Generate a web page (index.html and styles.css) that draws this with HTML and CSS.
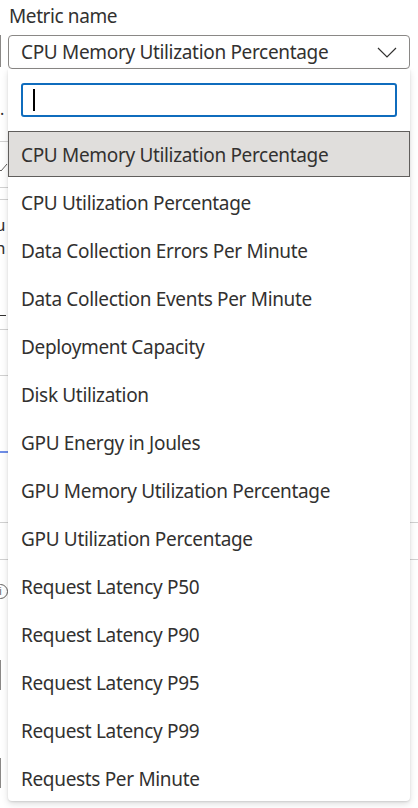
FILE: index.html
```html
<!doctype html>
<html lang="en">
<head>
  <meta charset="UTF-8">
  <meta name="viewport" content="width=device-width, initial-scale=1.0">
  <title>Metric name</title>
  <link rel="stylesheet" href="styles.css">
</head>
<body>
  <div class="page">
    <label class="field-label">Metric name</label>
    <div class="combo-row">
      <div class="combo">
        <span class="combo-value">CPU Memory Utilization Percentage</span>
        <svg class="chevron" width="20" height="11" viewBox="0 0 20 11">
          <polyline points="1,1 10,10 19,1" fill="none" stroke="#323130" stroke-width="1.2"/>
        </svg>
      </div>
    </div>

    <!-- content behind the open dropdown -->
    <div class="underlay">
      <div class="u-row u-a"><span class="dot">.</span></div>
      <div class="u-row u-b">
        <svg class="check" width="8" height="8" viewBox="0 0 8 8">
          <polyline points="-2,4 1,7 7,0" fill="none" stroke="#605e5c" stroke-width="1"/>
        </svg>
      </div>
      <div class="u-row u-c"></div>
      <div class="u-text">
        <span class="clip-letter first">u</span>
        <span class="clip-letter">h</span>
      </div>
      <div class="u-row u-e"><span class="dash"></span></div>
      <div class="u-row u-f"></div>
      <div class="u-row u-g"></div>
      <div class="u-row u-h full"></div>
      <div class="u-row u-i full"></div>
      <div class="u-info"><span class="info-circle">i</span></div>
      <div class="u-bar first"></div>
      <div class="u-bar"></div>
    </div>

    <div class="dropdown">
      <div class="search"><span class="caret"></span></div>
      <ul class="options">
        <li class="option selected">CPU Memory Utilization Percentage</li>
        <li class="option">CPU Utilization Percentage</li>
        <li class="option">Data Collection Errors Per Minute</li>
        <li class="option">Data Collection Events Per Minute</li>
        <li class="option">Deployment Capacity</li>
        <li class="option">Disk Utilization</li>
        <li class="option">GPU Energy in Joules</li>
        <li class="option">GPU Memory Utilization Percentage</li>
        <li class="option">GPU Utilization Percentage</li>
        <li class="option">Request Latency P50</li>
        <li class="option">Request Latency P90</li>
        <li class="option">Request Latency P95</li>
        <li class="option">Request Latency P99</li>
        <li class="option">Requests Per Minute</li>
      </ul>
    </div>
  </div>
</body>
</html>
```

FILE: styles.css
```css
body {
    margin: 0;
    background: #ffffff;
    font-family: "Noto Sans", "Open Sans", sans-serif;
    color: #323130;
    overflow: hidden;
}
.page {
    position: relative;
    width: 418px;
    height: 808px;
    overflow: hidden;
}
.field-label {
    display: block;
    height: 35px;
    padding-left: 9px;
    font-size: 19px;
    letter-spacing: -0.4px;
    line-height: 33px;
}
.combo-row {
    position: relative;
    padding-left: 8px;
    padding-right: 8px;
}
.combo-row::before {
    content: "";
    position: absolute;
    left: 0;
    top: 0;
    width: 1px;
    height: 32px;
    background: #8a8886;
}
.combo {
    box-sizing: border-box;
    height: 34px;
    border: 1px solid #8a8886;
    border-radius: 4px;
    display: flex;
    align-items: center;
    justify-content: space-between;
    padding: 0 12px 0 12px;
}
.combo-value {
    font-size: 19px;
    letter-spacing: -0.33px;
    line-height: 32px;
}
.chevron {
    display: block;
    margin-top: 1px;
}

/* underlay */
.u-row {
    box-sizing: border-box;
    width: 200px;
    border-bottom: 1px solid #d1d1d1;
    position: relative;
}
.u-row.full {
    width: 100%;
}
.u-a { height: 73px; }
.dot {
    position: absolute;
    left: 0;
    top: 32px;
    font-size: 16px;
    line-height: 16px;
}
.u-b { height: 46px; }
.check {
    position: absolute;
    left: 0;
    top: 22px;
}
.u-c { height: 12px; }
.u-text {
    height: 60px;
    padding-top: 16px;
    box-sizing: border-box;
    font-size: 17px;
    line-height: 18px;
}
.clip-letter {
    display: block;
    margin-left: -5px;
}
.clip-letter.first {
    margin-bottom: 5px;
}
.u-e { height: 70px; }
.dash {
    position: absolute;
    left: 0;
    top: 55px;
    width: 6px;
    height: 1px;
    background: #323130;
}
.u-f { height: 46px; }
.u-g {
    height: 77px;
    border-bottom: 2px solid #6f8ee8;
}
.u-h { height: 70px; }
.u-i { height: 37px; }
.u-info {
    height: 100px;
    position: relative;
}
.info-circle {
    position: absolute;
    left: -7px;
    top: 24px;
    width: 13px;
    height: 13px;
    border: 1px solid #605e5c;
    border-radius: 50%;
    font-size: 10px;
    line-height: 13px;
    text-align: center;
    color: #605e5c;
}
.u-bar {
    width: 1px;
    height: 30px;
    background: #8a8886;
}
.u-bar.first {
    margin-bottom: 68px;
}

/* open dropdown */
.dropdown {
    position: absolute;
    left: 8px;
    top: 69px;
    width: 402px;
    height: 732px;
    background: #ffffff;
    border-radius: 0 0 4px 4px;
    box-shadow: 0 3px 7px rgba(0, 0, 0, 0.13), 0 1px 2px rgba(0, 0, 0, 0.11);
    box-sizing: border-box;
    padding-top: 14px;
}
.search {
    box-sizing: border-box;
    height: 34px;
    margin: 0 13px 0 13px;
    border: 2px solid #0f6cbd;
    border-radius: 3px;
    padding: 4px 0 0 10px;
}
.caret {
    display: block;
    width: 2px;
    height: 22px;
    background: #000000;
}
.options {
    list-style: none;
    margin: 14px 0 0 0;
    padding: 0;
}
.option {
    box-sizing: border-box;
    height: 46px;
    margin-bottom: 2px;
    border: 1px solid transparent;
    padding-left: 12px;
    font-size: 19px;
    letter-spacing: -0.33px;
    line-height: 46px;
    white-space: nowrap;
}
.option.selected {
    background: #e0dedc;
    border-color: #605e5c;
}
```
